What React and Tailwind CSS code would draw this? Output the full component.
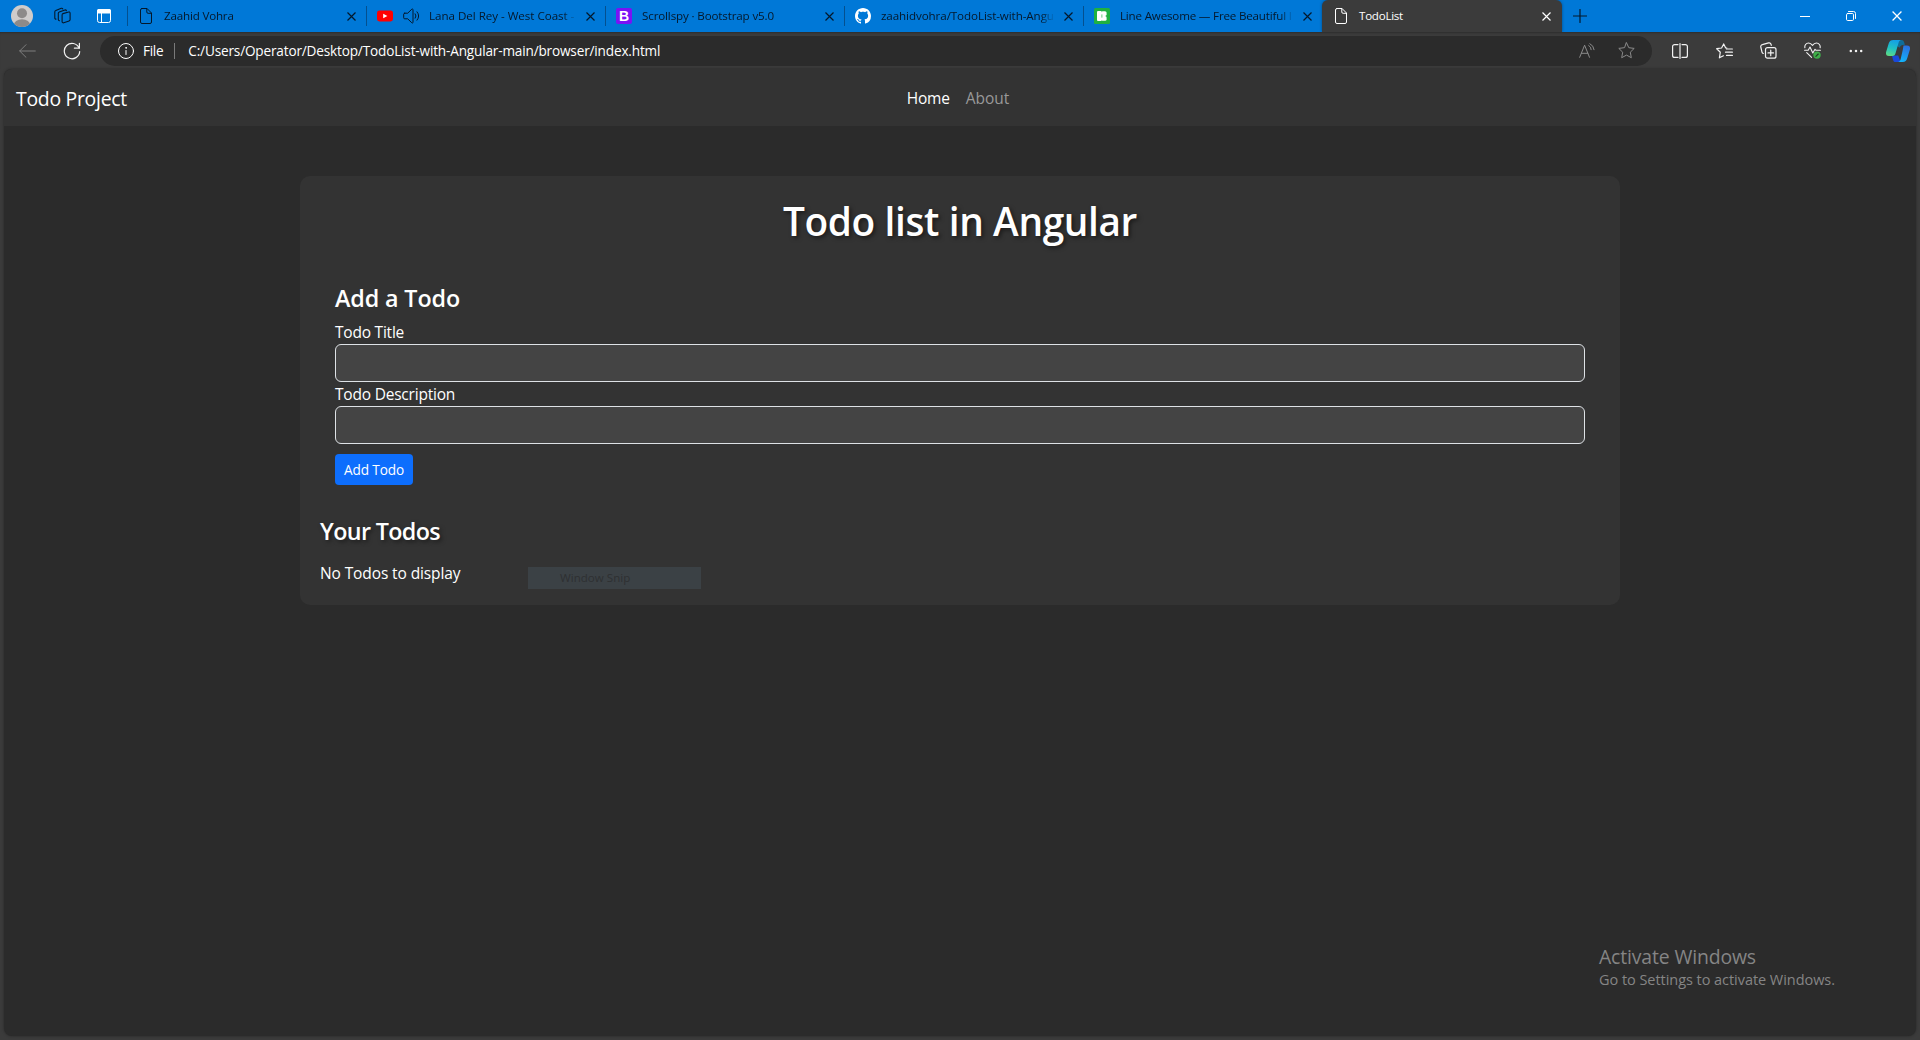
import React from "react";

/* ---------- icons ---------- */

function Svg({ w = 18, h = 18, className = "", children, sw = 1 }) {
  return (
    <svg
      width={w}
      height={h}
      viewBox={`0 0 ${w} ${h}`}
      fill="none"
      stroke="currentColor"
      strokeWidth={sw}
      strokeLinecap="round"
      strokeLinejoin="round"
      className={"block shrink-0 " + className}
    >
      {children}
    </svg>
  );
}

const Avatar = () => (
  <svg width="22" height="22" viewBox="0 0 22 22" className="block shrink-0">
    <clipPath id="avatar">
      <circle cx="11" cy="11" r="11" />
    </clipPath>
    <g clipPath="url(#avatar)">
      <rect width="22" height="22" fill="#cfcccb" />
      <circle cx="11" cy="8.3" r="5" fill="#8d8a89" />
      <ellipse cx="11" cy="20.5" rx="8.3" ry="6.3" fill="#8d8a89" />
    </g>
  </svg>
);

const Workspaces = () => (
  <Svg w={18} h={18} sw={1.1}>
    <g transform="translate(-0.2 0.4)">
      <path d="M9.200 6.200 14.800 4.600a1.100 1.100 0 0 1 1.500 1.100v6.500a1.400 1.400 0 0 1-1 1.300l-5.400 1.900a1.200 1.200 0 0 1-1.600-1.100V7.500a1.400 1.400 0 0 1 .9-1.300Z" />
      <path d="M5.700 13.400a1.200 1.200 0 0 1-1.200-1.200V5.900a1.500 1.500 0 0 1 1-1.400l5.600-1.900a1.200 1.200 0 0 1 1.500.7" />
      <path d="M2.200 11.700A1.200 1.200 0 0 1 1 10.500V4.600a1.500 1.500 0 0 1 1-1.400L7.500.9A1.200 1.200 0 0 1 9 1.500" />
    </g>
  </Svg>
);

const TabActions = () => (
  <svg width="14" height="14" viewBox="0 0 14 14" className="block shrink-0 text-white">
    <rect x="0.5" y="0.5" width="13" height="13" rx="2" fill="none" stroke="currentColor" />
    <rect x="0" y="0" width="14" height="4.5" rx="1.5" fill="currentColor" />
    <path d="M4.5 4v9.5" stroke="currentColor" />
  </svg>
);

const PageIcon = () => (
  <Svg w={12} h={16}>
    <path d="M2 .5h5L11.5 5v9a1.5 1.5 0 0 1-1.5 1.5H2A1.5 1.5 0 0 1 .5 14V2A1.5 1.5 0 0 1 2 .5Z" />
    <path d="M6.8.7V4a1.3 1.3 0 0 0 1.3 1.3h3.2" />
  </Svg>
);

const CloseIcon = ({ size = 9 }) => (
  <svg width={size} height={size} viewBox="0 0 9 9" className="block shrink-0" fill="none" stroke="currentColor" strokeWidth="1.15">
    <path d="M.5.5l8 8M8.5.5l-8 8" />
  </svg>
);

const YouTube = () => (
  <svg width="16" height="12" viewBox="0 0 16 12" className="block shrink-0">
    <rect width="16" height="11" y="0.5" rx="2.4" fill="#f00" />
    <path d="M6.2 3.8v4.4L10.4 6Z" fill="#fff" />
  </svg>
);

const Speaker = () => (
  <Svg w={17} h={16}>
    <path d="M1.700 5.200h3L8.800 1.200c.4-.5 1.200-.2 1.200.5v12.600c0 .7-.8 1-1.200.5L4.700 10.800H1.700A1 1 0 0 1 .700 9.800V6.200a1 1 0 0 1 1-1Z" />
    <path d="M12.200 5.800a3.600 3.600 0 0 1 0 4.400M14 3.800a6.600 6.600 0 0 1 0 8.400" />
  </Svg>
);

const Bootstrap = () => (
  <div className="flex h-4 w-4 shrink-0 items-center justify-center rounded-[2px] bg-[#7a12f5] font-['Liberation_Sans'] text-[14px] leading-none font-bold text-white">
    B
  </div>
);

const GitHub = () => (
  <svg width="16" height="16" viewBox="0 0 16 16" className="block shrink-0" fill="#fff">
    <path d="M8 0C3.580 0 0 3.580 0 8c0 3.540 2.290 6.530 5.470 7.590.4.070.550-.170.550-.380 0-.190-.010-.820-.010-1.490-2.010.370-2.530-.490-2.690-.940-.090-.230-.480-.940-.820-1.130-.280-.150-.680-.520-.010-.530.630-.010 1.080.580 1.230.820.720 1.210 1.870.870 2.330.660.070-.520.280-.870.510-1.070-1.780-.2-3.640-.890-3.640-3.950 0-.870.310-1.590.820-2.150-.080-.2-.360-1.020.080-2.120 0 0 .670-.210 2.200.820.640-.180 1.320-.270 2-.270s1.360.090 2 .270c1.530-1.040 2.200-.820 2.200-.820.440 1.100.160 1.920.080 2.120.510.560.820 1.270.820 2.150 0 3.070-1.870 3.750-3.650 3.950.290.250.540.730.540 1.480 0 1.070-.010 1.930-.010 2.200 0 .210.150.460.550.380A8.010 8.010 0 0 0 16 8c0-4.420-3.580-8-8-8Z" />
  </svg>
);

const Icons8 = () => (
  <svg width="16" height="16" viewBox="0 0 16 16" className="block shrink-0">
    <rect width="16" height="16" rx="1.5" fill="#1fb141" />
    <rect x="3" y="3" width="4.700" height="10" rx="1" fill="#fff" />
    <rect x="7" y="3.200" width="5.600" height="4.700" rx="1.600" fill="#fff" />
    <rect x="7" y="8.100" width="5.600" height="4.700" rx="1.600" fill="#fff" />
    <path d="M7.900 6.200v3.600" stroke="#1fb141" strokeWidth="0.500" />
  </svg>
);

const Copilot = () => (
  <svg width="24" height="22" viewBox="0 0 24 22" className="block shrink-0">
    <defs>
      <linearGradient id="cpA" x1="0.500" y1="0" x2="0.200" y2="1">
        <stop offset="0" stopColor="#149fe6" />
        <stop offset="0.500" stopColor="#20c0c4" />
        <stop offset="1" stopColor="#5fdc83" />
      </linearGradient>
      <linearGradient id="cpB" x1="0.700" y1="0" x2="0.400" y2="1">
        <stop offset="0" stopColor="#2b6fe0" />
        <stop offset="1" stopColor="#12b4fb" />
      </linearGradient>
    </defs>
    <path d="M11 0h4.300c1.600 0 2.300.9 2.800 2.300l.8 2.500c-3.500.2-4.600 1-5.300 3L11 6Z" fill="#0f6d99" />
    <path d="M6 15.500h6.200l1.500 4c.5 1.500 1.100 2.300 2.300 2.500H9.700c-1.800 0-2.300-.9-2.800-2.600Z" fill="#1a48d8" />
    <path d="M7.300 0h8c-1.700.2-2.300 1.300-2.800 3L9.600 13c-.5 1.800-1.300 3-3.300 3H3c-2.500 0-3.400-1.500-2.900-4L2.700 3.600C3.500 1 4.800 0 7.300 0Z" fill="url(#cpA)" />
    <path d="M17.500 5.500H21c2.500 0 3.400 1.500 2.900 4l-2.600 8.600c-.8 2.700-2 3.900-4.600 3.900h-4.900c1.700-.2 2.400-1.300 2.900-3l2.200-9.700c.3-2 .6-3.800.6-3.800Z" fill="url(#cpB)" />
  </svg>
);

/* ---------- browser chrome ---------- */

const TABS = [
  {
    icon: <PageIcon />,
    title: <span className="tracking-[-0.180px]">Zaahid Vohra</span>,
    gap: "ml-3 gap-3",
  },
  {
    icon: (
      <div className="flex items-center gap-[10px]">
        <YouTube />
        <Speaker />
      </div>
    ),
    title: <span className="tracking-[-0.030px]">Lana Del Rey - West Coast -</span>,
    gap: "ml-[10px] gap-[9px]",
  },
  { icon: <Bootstrap />, title: <span className="tracking-[-0.140px]">Scrollspy · Bootstrap v5.0</span>, gap: "ml-[10px] gap-[10px]" },
  { icon: <GitHub />, title: <span className="tracking-[-0.080px]">zaahidvohra/TodoList-with-Angu</span>, gap: "ml-[10px] gap-[10px]" },
  { icon: <Icons8 />, title: <span className="tracking-[-0.180px]">Line Awesome — Free Beautiful I</span>, gap: "ml-[10px] gap-[10px]" },
];

function Tab({ tab }) {
  return (
    <div className="flex h-8 w-[239px] shrink-0 items-center">
      <div className="h-5 w-px shrink-0 bg-[#04508f]" />
      <div className={"flex min-w-0 flex-1 items-center " + tab.gap}>
        {tab.icon}
        <div className="min-w-0 flex-1 mask-r-from-[calc(100%-14px)] text-[11.600px] leading-4 whitespace-nowrap text-[#04182b]">
          {tab.title}
        </div>
      </div>
      <div className="mr-[10px] ml-[9px] text-[#04182b]">
        <CloseIcon />
      </div>
    </div>
  );
}

function TabStrip() {
  return (
    <header className="flex h-8 items-center bg-[#0078d7] pl-[11px] text-[#04182b]">
      <Avatar />
      <div className="ml-[21px]">
        <Workspaces />
      </div>
      <div className="ml-[25px]">
        <TabActions />
      </div>
      <div className="ml-4 flex items-center">
        {TABS.map((tab, i) => (
          <Tab key={i} tab={tab} />
        ))}
      </div>
      <div className="flex h-8 w-[240px] shrink-0 items-center rounded-t-md bg-[#3b3b3b] pr-[11px] pl-[13px] text-white shadow-[0_0_3px_rgba(0,0,0,0.4)]">
        <PageIcon />
        <span className="ml-3 flex-1 text-[11.600px] leading-4 tracking-[-0.260px]">TodoList</span>
        <CloseIcon />
      </div>
      <Svg w={14} h={14} className="ml-[11px] text-[#04182b]" sw={1.200}>
        <path d="M7 .5v13M.5 7h13" />
      </Svg>
      <div className="ml-auto flex items-center pr-[18px] text-white">
        <Svg w={10} h={10}>
          <path d="M0 5.500h10" />
        </Svg>
        <Svg w={10} h={10} className="ml-9">
          <rect x="0.500" y="2.500" width="7" height="7" rx="1.200" />
          <path d="M2.500.5h5a2 2 0 0 1 2 2v5" />
        </Svg>
        <div className="ml-9">
          <CloseIcon size={10} />
        </div>
      </div>
    </header>
  );
}

function Toolbar() {
  return (
    <div className="flex h-[37px] items-center bg-[#3b3b3b] text-white shadow-[inset_0_2px_2px_-1px_rgba(0,0,0,0.25)]">
      <Svg w={17} h={14} className="ml-[19px] text-[#7e7e7e]">
        <path d="M.7 7h15.600M7 .7.700 7 7 13.300" />
      </Svg>
      <Svg w={18} h={18} className="ml-[27px] text-[#f2f2f2]" sw={1.200}>
        <path d="M16.100 6A7.700 7.700 0 1 0 16.700 9.500" />
        <path d="M16.400 1.300v4.900h-5" />
      </Svg>
      <div className="ml-[19px] flex h-[30px] w-[1552px] items-center rounded-full bg-[#2b2b2b] pl-[18px]">
        <Svg w={16} h={16}>
          <circle cx="8" cy="8" r="7.500" />
          <path d="M8 7.500v4" />
          <circle cx="8" cy="4.900" r="0.400" />
        </Svg>
        <span className="ml-[9px] text-[13.600px] leading-5 tracking-[-0.300px]">File</span>
        <div className="ml-[11px] h-4 w-px bg-[#7a7a7a]" />
        <span className="ml-[13px] text-[13.600px] leading-5 tracking-[-0.170px]">
          C:/Users/Operator/Desktop/TodoList-with-Angular-main/browser/index.html
        </span>
        <div className="ml-auto flex items-center gap-[23px] pr-[17px] text-[#8b8b8b]">
          <Svg w={16} h={16}>
            <path d="M.7 14.300 5.600 2.200l4.900 12.100M2.400 10.300h6.400" />
            <path d="M9.700 2.400a5 5 0 0 1 2.500 4.300M10.900.7a7.500 7.500 0 0 1 4.200 6" />
          </Svg>
          <Svg w={17} h={17}>
            <path d="M8.500.8l2.300 4.900 5.400.7-3.900 3.800 1 5.500-4.800-2.600-4.800 2.600 1-5.500L.800 6.400l5.400-.7Z" />
          </Svg>
        </div>
      </div>
      <div className="ml-5 flex items-center text-[#f2f2f2]">
        <Svg w={16} h={16} sw={1.200}>
          <path d="M6 1.600H2.600a2 2 0 0 0-2 2v8.800a2 2 0 0 0 2 2H6M10 1.600h3.400a2 2 0 0 1 2 2v8.800a2 2 0 0 1-2 2H10M8 .6v14.800" />
        </Svg>
        <Svg w={17} h={16} className="ml-[28px]" sw={1.200}>
          <path d="M10.800 5.200 9.700 5 7.700.9 5.600 5 .700 5.700l3.600 3.500-.9 5.600 4-2" />
          <path d="M10.500 6h5.900M9.500 9.200h6.900M10.500 12.400h5.900" />
        </Svg>
        <Svg w={17} h={17} className="ml-[27px]" sw={1.200}>
          <rect x="5.500" y="5.700" width="10.500" height="10.500" rx="2" />
          <path d="M10.750 8.200v5.500M8 10.950h5.500" />
          <path d="M3.300 11.500a2 2 0 0 1-1.300-1.400L.8 5a2 2 0 0 1 1.500-2.400L8.600.9A2 2 0 0 1 11 2.200l.3 1.100" />
        </Svg>
        <Svg w={17} h={17} className="ml-[27px]" sw={1.100}>
          <path d="M.9 5.800C.4 3.400 2 1 4.600 1 6.300 1 7.500 2 8.500 3.300 9.500 2 10.700 1 12.400 1c2.600 0 4.200 2.400 3.700 4.800" />
          <path d="M.6 8.200h3.600L6 5l2.800 6L11 7.300l.8.900h4.600M2.700 10.600l4.900 4.700" />
          <circle cx="13" cy="13.100" r="3.700" fill="#3fae49" stroke="none" />
          <path d="M11.900 14.300 14.200 12" stroke="#1f3d22" />
        </Svg>
        <svg width="14" height="4" viewBox="0 0 14 4" fill="currentColor" className="ml-[28px] block">
          <circle cx="1.800" cy="2" r="1.250" />
          <circle cx="7" cy="2" r="1.250" />
          <circle cx="12.200" cy="2" r="1.250" />
        </svg>
        <div className="ml-[23px]">
          <Copilot />
        </div>
      </div>
    </div>
  );
}

/* ---------- page ---------- */

function Field({ label }) {
  return (
    <label className="block text-[15.500px] leading-6">
      {label}
      <input className="block h-[38px] w-full rounded-[6px] border border-[#dee2e6] bg-[#444] px-3 outline-none" />
    </label>
  );
}

function TodoCard() {
  return (
    <main className="relative mx-auto mt-[50px] h-[429px] w-[1320px] rounded-[10px] bg-[#333] p-5 text-white">
      <h1 className="pt-px text-center text-[38.800px] leading-[48px] font-semibold tracking-[-0.375px] [text-shadow:2px_2px_4px_rgba(0,0,0,0.5)]">
        Todo list in Angular
      </h1>
      <form className="mx-[15px] mt-[38px]">
        <h2 className="mb-[7px] pt-px text-[23.300px] leading-[29px] font-semibold tracking-[-0.110px]">Add a Todo</h2>
        <Field label={<span className="tracking-[-0.220px]">Todo Title</span>} />
        <Field label={<span className="tracking-[-0.210px]">Todo Description</span>} />
        <button
          type="button"
          className="mt-[10px] block h-[31px] w-[78px] rounded-[4px] bg-[#0d6efd] text-[13.600px] leading-[21px] tracking-[-0.130px]"
        >
          Add Todo
        </button>
      </form>
      <h2 className="mt-8 text-[23.300px] leading-[29px] font-semibold tracking-[-0.640px] [text-shadow:2px_2px_4px_rgba(0,0,0,0.5)]">
        Your Todos
      </h2>
      <p className="mt-[15px] text-[15.500px] leading-6 tracking-[-0.110px]">No Todos to display</p>
      <div className="absolute top-[391px] left-[228px] h-[22px] w-[173px] bg-[#3b4145] pl-8 text-[11.600px] leading-[22px] text-[#2e3032]">
        Window Snip
      </div>
    </main>
  );
}

export default function App() {
  return (
    <div className="flex h-[1040px] w-[1920px] flex-col overflow-hidden bg-[#3b3b3b] font-['Open_Sans','Noto_Sans',sans-serif]">
      <TabStrip />
      <Toolbar />
      <div className="relative mx-1 mb-1 flex-1 overflow-hidden rounded-lg bg-[#2b2b2b] shadow-[0_0_3px_rgba(0,0,0,0.35)]">
        <nav className="grid h-[57px] grid-cols-[1fr_auto_1fr] items-center bg-[#333] px-3 text-white">
          <span className="pt-[2px] text-[19.400px] leading-[30px] tracking-[-0.270px]">Todo Project</span>
          <div className="mr-1 flex gap-4 pt-px text-[15.500px] leading-6">
            <span className="tracking-[-0.200px]">Home</span>
            <span className="text-[#999]">About</span>
          </div>
        </nav>
        <TodoCard />
        <div className="absolute right-[75px] bottom-[46px] w-[242px] text-[#858585]">
          <div className="text-[19.400px] leading-[27px] tracking-[-0.140px]">Activate Windows</div>
          <div className="text-[14.500px] leading-5 tracking-[-0.045px]">Go to Settings to activate Windows.</div>
        </div>
      </div>
    </div>
  );
}
